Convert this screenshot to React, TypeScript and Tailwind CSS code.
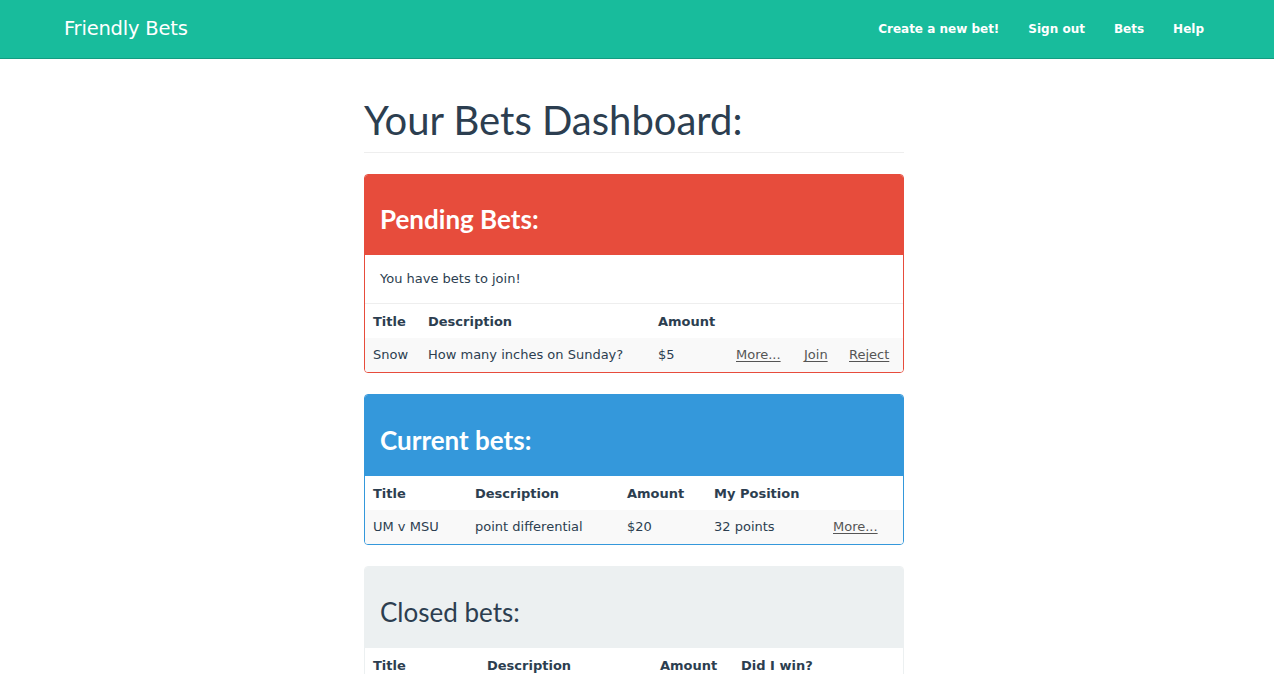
import React from "react";

const body = { fontFamily: '"DejaVu Sans", Verdana, sans-serif' };
const lato = { fontFamily: 'Lato, "Helvetica Neue", sans-serif' };

type Col = { label: string; w: string };

function BetTable({ cols, rows }: { cols: Col[]; rows: React.ReactNode[][] }) {
  return (
    <table className="w-full table-fixed border-collapse text-[13px] text-[#2c3e50]">
      <colgroup>
        {cols.map((c, i) => (
          <col key={i} className={c.w} />
        ))}
      </colgroup>
      <thead>
        <tr className="h-[34px]">
          {cols.map((c, i) => (
            <th key={i} className="px-2 pt-[2px] text-left font-bold whitespace-nowrap">
              {c.label}
            </th>
          ))}
        </tr>
      </thead>
      <tbody>
        {rows.map((r, i) => (
          <tr key={i} className="h-[34px] bg-[#f9f9f9]">
            {r.map((cell, j) => (
              <td key={j} className="px-2 whitespace-nowrap">
                {cell}
              </td>
            ))}
          </tr>
        ))}
      </tbody>
    </table>
  );
}

function Link({ children }: { children: React.ReactNode }) {
  return <a className="text-[#555] underline underline-offset-2 cursor-pointer">{children}</a>;
}

export default function App() {
  return (
    <div className="min-h-screen bg-white" style={body}>
      <nav className="h-[59px] bg-[#18bc9c] border-b border-[#139c81] flex items-center justify-between pl-[64px] pr-[70px]">
        <span className="text-white text-[19.5px] tracking-[-0.2px]">Friendly Bets</span>
        <div className="flex items-center text-white text-[12px] font-bold gap-[29px]">
          <a>Create a new bet!</a>
          <a>Sign out</a>
          <a>Bets</a>
          <a>Help</a>
        </div>
      </nav>

      <main className="w-[540px] ml-[364px]">
        <h1
          className="mt-[39px] pb-[10px] border-b border-[#eeeeee] text-[40px] leading-[1.1] text-[#2c3e50]"
          style={lato}
        >
          Your Bets Dashboard:
        </h1>

        <section className="mt-[21px] rounded-[4px] border border-[#e74c3c] overflow-hidden">
          <div className="h-[80px] bg-[#e74c3c] px-[15px] flex items-end pb-[23px]">
            <h2 className="text-white text-[26px] font-bold leading-none" style={lato}>
              Pending Bets:
            </h2>
          </div>
          <div className="h-[49px] px-[15px] flex items-center border-b border-[#eeeeee] text-[13px] text-[#2c3e50]">
            You have bets to join!
          </div>
          <BetTable
            cols={[
              { label: "Title", w: "w-[55px]" },
              { label: "Description", w: "w-[230px]" },
              { label: "Amount", w: "w-[78px]" },
              { label: "", w: "w-[68px]" },
              { label: "", w: "w-[45px]" },
              { label: "", w: "w-[62px]" },
            ]}
            rows={[
              [
                "Snow",
                "How many inches on Sunday?",
                "$5",
                <Link>More...</Link>,
                <Link>Join</Link>,
                <Link>Reject</Link>,
              ],
            ]}
          />
        </section>

        <section className="mt-[21px] rounded-[4px] border border-[#3498db] overflow-hidden">
          <div className="h-[81px] bg-[#3498db] px-[15px] flex items-end pb-[23px]">
            <h2 className="text-white text-[26px] font-bold leading-none" style={lato}>
              Current bets:
            </h2>
          </div>
          <BetTable
            cols={[
              { label: "Title", w: "w-[102px]" },
              { label: "Description", w: "w-[152px]" },
              { label: "Amount", w: "w-[87px]" },
              { label: "My Position", w: "w-[119px]" },
              { label: "", w: "w-[78px]" },
            ]}
            rows={[["UM v MSU", "point differential", "$20", "32 points", <Link>More...</Link>]]}
          />
        </section>

        <section className="mt-[21px] rounded-[4px] border border-[#ecf0f1] overflow-hidden">
          <div className="h-[81px] bg-[#ecf0f1] px-[15px] flex items-end pb-[23px]">
            <h2 className="text-[#2c3e50] text-[26px] leading-none" style={lato}>
              Closed bets:
            </h2>
          </div>
          <BetTable
            cols={[
              { label: "Title", w: "w-[114px]" },
              { label: "Description", w: "w-[173px]" },
              { label: "Amount", w: "w-[81px]" },
              { label: "Did I win?", w: "w-[100px]" },
              { label: "", w: "w-[70px]" },
            ]}
            rows={[["Superbowl", "Who wins?", "$10", "Yes", <Link>More...</Link>]]}
          />
        </section>
      </main>
    </div>
  );
}
